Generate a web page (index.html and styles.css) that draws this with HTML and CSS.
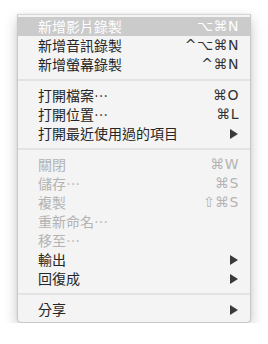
FILE: index.html
```html
<!DOCTYPE html>
<html lang="zh-Hant">
<head>
<meta charset="utf-8">
<link rel="stylesheet" href="styles.css">
</head>
<body>
<div class="menu">
  <div class="item hl"><span class="label">新增影片錄製</span><span class="key">⌥⌘N</span></div>
  <div class="item"><span class="label">新增音訊錄製</span><span class="key">^⌥⌘N</span></div>
  <div class="item"><span class="label">新增螢幕錄製</span><span class="key">^⌘N</span></div>
  <div class="sep"></div>
  <div class="item"><span class="label">打開檔案…</span><span class="key">⌘O</span></div>
  <div class="item"><span class="label">打開位置…</span><span class="key">⌘L</span></div>
  <div class="item"><span class="label">打開最近使用過的項目</span><span class="arrow"></span></div>
  <div class="sep"></div>
  <div class="item off"><span class="label">關閉</span><span class="key">⌘W</span></div>
  <div class="item off"><span class="label">儲存…</span><span class="key">⌘S</span></div>
  <div class="item off"><span class="label">複製</span><span class="key">⇧⌘S</span></div>
  <div class="item off"><span class="label">重新命名…</span></div>
  <div class="item off"><span class="label">移至…</span></div>
  <div class="item"><span class="label">輸出</span><span class="arrow"></span></div>
  <div class="item"><span class="label">回復成</span><span class="arrow"></span></div>
  <div class="sep"></div>
  <div class="item"><span class="label">分享</span><span class="arrow"></span></div>
</div>
</body>
</html>
```
FILE: styles.css
```css
html, body {
  margin: 0;
  background: #ffffff;
}
body {
  padding: 14px 17px 0 17px;
  font-family: "Noto Sans CJK TC", "Liberation Sans", sans-serif;
}
.menu {
  box-sizing: border-box;
  width: 234px;
  background: #f4f4f4;
  border: 1px solid #c9c9c9;
  border-top-color: #d6d6d6;
  border-radius: 0 0 5px 5px;
  padding: 2px 0 3px 0;
  box-shadow: 0 6px 14px rgba(0, 0, 0, 0.22), 0 0 3px rgba(0, 0, 0, 0.08);
}
.item {
  display: flex;
  align-items: center;
  justify-content: space-between;
  height: 19px;
  padding: 0 11px 0 20px;
  font-size: 14px;
  color: #262626;
}
.label {
  line-height: 19px;
  white-space: nowrap;
}
.key {
  font-family: "DejaVu Sans", "Liberation Sans", sans-serif;
  font-size: 14px;
  letter-spacing: 0.5px;
  color: #333333;
  line-height: 19px;
}
.hl {
  background: #cbcbcb;
  color: #ffffff;
}
.hl .key {
  color: #ffffff;
}
.off,
.off .key {
  color: #b3b3b3;
}
.arrow {
  width: 0;
  height: 0;
  margin-right: 1px;
  border-top: 5px solid transparent;
  border-bottom: 5px solid transparent;
  border-left: 8px solid #3a3a3a;
}
.sep {
  height: 2px;
  margin: 5px 0;
  background: #e3e3e3;
}
```
